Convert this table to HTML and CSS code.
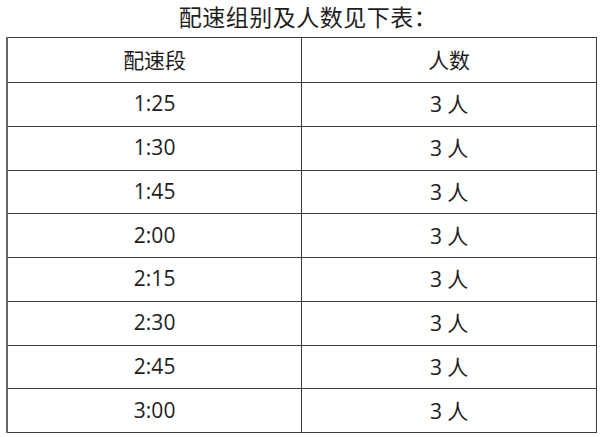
FILE: index.html
```html
<!DOCTYPE html>
<html lang="zh">
<head>
<meta charset="utf-8">
<link rel="stylesheet" href="styles.css">
</head>
<body>
<div class="title">配速组别及人数见下表：</div>
<table class="pace">
  <thead>
    <tr><th>配速段</th><th>人数</th></tr>
  </thead>
  <tbody>
    <tr><td>1:25</td><td>3 人</td></tr>
    <tr><td>1:30</td><td>3 人</td></tr>
    <tr><td>1:45</td><td>3 人</td></tr>
    <tr><td>2:00</td><td>3 人</td></tr>
    <tr><td>2:15</td><td>3 人</td></tr>
    <tr><td>2:30</td><td>3 人</td></tr>
    <tr><td>2:45</td><td>3 人</td></tr>
    <tr><td>3:00</td><td>3 人</td></tr>
  </tbody>
</table>
</body>
</html>
```

FILE: styles.css
```css
html, body {
  margin: 0;
  padding: 0;
  background: #ffffff;
}
body {
  width: 600px;
  height: 437px;
  overflow: hidden;
  font-family: "Open Sans", "Noto Sans CJK SC", sans-serif;
  color: #1e1e1e;
}
.title {
  height: 37px;
  line-height: 32px;
  text-align: center;
  font-size: 23px;
  padding-left: 16px;
  font-family: "Noto Sans CJK SC", sans-serif;
  letter-spacing: 0.5px;
}
.pace {
  margin-left: 6px;
  width: 591px;
  border-collapse: collapse;
  table-layout: fixed;
}
.pace th, .pace td {
  border: 1px solid #3c3c3c;
  text-align: center;
  vertical-align: middle;
  padding: 0 0 2px 0;
  font-size: 21px;
  font-weight: normal;
}
.pace th {
  height: 42px;
  font-family: "Noto Sans CJK SC", sans-serif;
}
.pace td {
  height: 40.75px;
}
.pace th:first-child, .pace td:first-child {
  border-left: 2px solid #666;
}
```
